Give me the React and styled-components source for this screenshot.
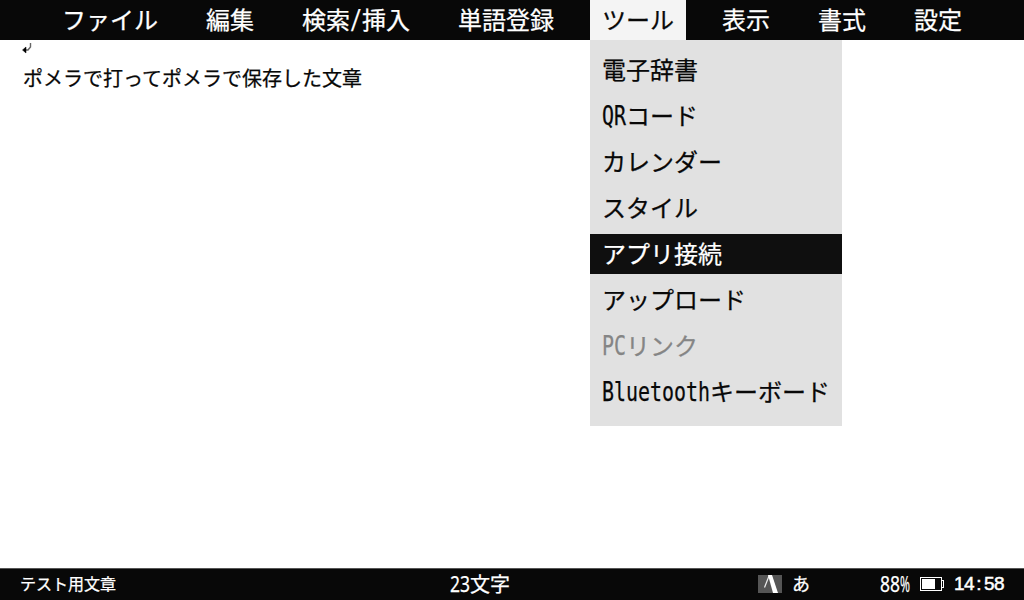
import React from 'react';
import styled, { createGlobalStyle } from "styled-components";

const GlobalStyle = createGlobalStyle`
  body {
    margin: 0;
    background: #fff;
    overflow: hidden;
  }
`;

const Screen = styled.div`
  display: flex;
  flex-direction: column;
  width: 1024px;
  height: 600px;
  background: #fff;
  color: #080808;
  font-family: "Noto Sans CJK JP", sans-serif;
  white-space: nowrap;
  -webkit-text-stroke: 0.25px currentColor;
`;

const MenuBar = styled.nav`
  display: flex;
  flex: none;
  gap: 24px;
  height: 40px;
  padding-left: 50px;
  background: #080808;
`;

const MenuTab = styled.div`
  position: relative;
  padding: 0 12px;
  font-size: 24px;
  line-height: 38px;
  background: ${props => props.$open ? "#f4f4f4" : "transparent"};
  color: ${props => props.$open ? "#080808" : "#fff"};
`;

const Dropdown = styled.div`
  position: absolute;
  top: 40px;
  left: 0;
  display: flex;
  flex-direction: column;
  gap: 6px;
  width: 252px;
  padding: 10px 0 14px;
  background: #e1e1e1;
`;

const DropdownItem = styled.div`
  height: 40px;
  padding-left: 12px;
  line-height: 38px;
  background: ${props => props.$selected ? "#0f0f0f" : "transparent"};
  color: ${props => props.$selected ? "#fff" : props.$disabled ? "#858585" : "#080808"};
`;

// latin characters take half of a kana cell
const HalfBox = styled.span`
  display: inline-block;
  width: ${props => props.$count * 0.5}em;
  line-height: 1;
`;

const HalfText = styled.span`
  display: inline-block;
  font-family: "DejaVu Sans Mono", monospace;
  font-size: 1.07em;
  transform: scaleX(0.776);
  transform-origin: left;
`;

const HalfDigit = styled.span`
  display: inline-block;
  width: 0.5em;
  line-height: 1;

  > span {
    display: inline-block;
    font-family: "Noto Sans", sans-serif;
    font-size: 1.08em;
    transform: scaleX(${props => props.$wide ? 0.557 : 0.81});
    transform-origin: left;
  }
`;

const Document = styled.main`
  flex: 1;
  padding: 3px 22px;
`;

const ReturnMark = styled.svg`
  display: block;
  width: 10px;
  height: 11px;
`;

const Line = styled.p`
  margin: 9px 0 0;
  padding-left: 1px;
  font-size: 20px;
  line-height: 30px;
`;

const StatusBar = styled.footer`
  display: grid;
  grid-template-columns: 430px 308px 24px 98px 40px 34px 1fr;
  align-items: center;
  flex: none;
  box-sizing: border-box;
  height: 32px;
  padding: 0 0 2px 20px;
  border-top: 1px solid #555;
  background: #080808;
  color: #fff;
`;

const StatusText = styled.span`
  padding-left: ${props => props.$indent || 0}px;
  font-size: ${props => props.$size || 20}px;
  line-height: ${props => props.$size ? 26 : 28}px;
  padding-bottom: ${props => props.$size ? 2 : 0}px;
`;

const Clock = styled.span`
  display: grid;
  grid-template-columns: repeat(5, 10px);
  font-family: "Liberation Sans", sans-serif;
  font-size: 19px;
  line-height: 28px;
  text-align: center;
  -webkit-text-stroke: 0.5px #fff;
`;

const menus = ["ファイル", "編集", "検索/挿入", "単語登録", "ツール", "表示", "書式", "設定"];

const tools = [
  { text: "電子辞書" },
  { half: "QR", text: "コード" },
  { text: "カレンダー" },
  { text: "スタイル" },
  { text: "アプリ接続", selected: true },
  { text: "アップロード" },
  { half: "PC", text: "リンク", disabled: true },
  { half: "Bluetooth", text: "キーボード" },
];

const Half = ({ children }) => (
  <HalfBox $count={children.length}>
    <HalfText>{children}</HalfText>
  </HalfBox>
);

const Digits = ({ value }) => value.split("").map((char, i) => (
  <HalfDigit key={i} $wide={char === "%"}>
    <span>{char}</span>
  </HalfDigit>
));

const MenuLabel = ({ name }) => name.split("/").map((part, i) => (
  <React.Fragment key={part}>
    {i > 0 && <Half>/</Half>}
    {part}
  </React.Fragment>
));

const ToolMenu = () => (
  <Dropdown>
    {tools.map(item => (
      <DropdownItem key={item.text} $selected={item.selected} $disabled={item.disabled}>
        {item.half && <Half>{item.half}</Half>}
        {item.text}
      </DropdownItem>
    ))}
  </Dropdown>
);

const ImeLogo = () => (
  <svg width="24" height="18" viewBox="0 0 24 18">
    <rect width="24" height="18" fill="#555" />
    <path d="M6.5 12.5L11 1" stroke="#eee" strokeWidth="1.2" />
    <path d="M10 0h4l6 18h-5z" fill="#fff" />
  </svg>
);

const Battery = () => (
  <svg width="24" height="14" viewBox="0 0 24 14" shapeRendering="crispEdges">
    <path d="M.5.5h21v3h2v7h-2v3H.5z" fill="none" stroke="#fff" />
    <path d="M21.5 3v8" stroke="#fff" />
    <rect x="2" y="2" width="13" height="10" fill="#fff" />
  </svg>
);

class App extends React.Component {
  render() {
    return (
      <Screen>
        <GlobalStyle />
        <MenuBar>
          {menus.map(name => (
            <MenuTab key={name} $open={name === "ツール"}>
              <MenuLabel name={name} />
              {name === "ツール" && <ToolMenu />}
            </MenuTab>
          ))}
        </MenuBar>
        <Document>
          <ReturnMark viewBox="0 0 10 11">
            <path d="M8.5 0v4L6 7H3" fill="none" stroke="#666" strokeWidth="1.4" />
            <path d="M.5 7L4 4v6z" fill="#000" stroke="#000" strokeWidth=".5" />
          </ReturnMark>
          <Line>ポメラで打ってポメラで保存した文章</Line>
        </Document>
        <StatusBar>
          <StatusText $size={16}>テスト用文章</StatusText>
          <StatusText><Digits value="23" />文字</StatusText>
          <ImeLogo />
          <StatusText $size={18} $indent={10}>あ</StatusText>
          <StatusText><Digits value="88%" /></StatusText>
          <Battery />
          <Clock>{"14:58".split("").map((char, i) => <span key={i}>{char}</span>)}</Clock>
        </StatusBar>
      </Screen>
    );
  }
}

export default App;
